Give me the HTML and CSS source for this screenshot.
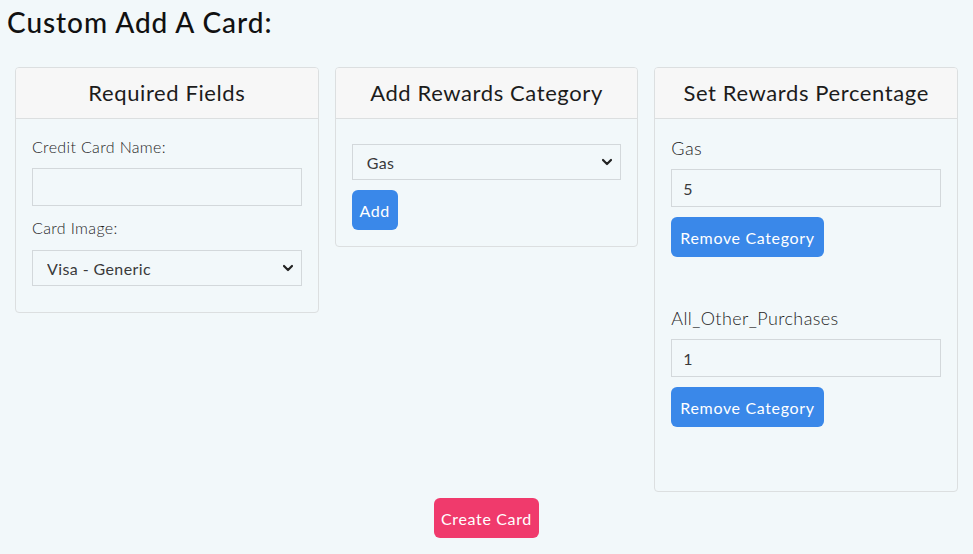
FILE: index.html
```html
<!DOCTYPE html>
<html>
<head>
<meta charset="utf-8">
<link rel="stylesheet" href="styles.css">
</head>
<body>
<h1 class="title">Custom Add A Card:</h1>
<div class="row">
  <div class="card card-req">
    <div class="card-header">Required Fields</div>
    <div class="card-body">
      <label class="lbl">Credit Card Name:</label>
      <input class="field field-name" type="text">
      <label class="lbl lbl-2">Card Image:</label>
      <select class="field sel"><option>Visa - Generic</option></select>
    </div>
  </div>
  <div class="card card-add">
    <div class="card-header">Add Rewards Category</div>
    <div class="card-body body-add">
      <select class="field sel"><option>Gas</option></select>
      <button class="btn btn-blue btn-add">Add</button>
    </div>
  </div>
  <div class="card card-pct">
    <div class="card-header">Set Rewards Percentage</div>
    <div class="card-body">
      <div class="cat">
        <label class="cat-lbl">Gas</label>
        <input class="field field-num" type="text" value="5">
        <button class="btn btn-blue">Remove Category</button>
      </div>
      <div class="cat">
        <label class="cat-lbl">All_Other_Purchases</label>
        <input class="field field-num" type="text" value="1">
        <button class="btn btn-blue">Remove Category</button>
      </div>
    </div>
  </div>
</div>
<div class="foot">
  <button class="btn btn-pink">Create Card</button>
</div>
</body>
</html>
```
FILE: styles.css
```css
* { box-sizing: border-box; }
html, body { margin: 0; padding: 0; }
body {
  background: #f2f8fa;
  font-family: "Lato", "Open Sans", sans-serif;
  color: #222;
  width: 973px;
  height: 554px;
  overflow: hidden;
}
.title {
  margin: 0;
  padding: 5px 0 0 7px;
  font-size: 28px;
  font-weight: 500;
  line-height: 34px;
  letter-spacing: 0.95px;
  color: #111;
  height: 67px;
}
.row {
  display: flex;
  gap: 16px;
  padding: 0 15px;
  align-items: flex-start;
}
.card {
  flex: 1;
  border: 1px solid #dcdfe0;
  border-radius: 4px;
  overflow: hidden;
}
.card-header {
  background: #f7f7f7;
  border-bottom: 1px solid #dcdfe0;
  height: 51px;
  line-height: 49px;
  text-align: center;
  font-size: 22px;
  letter-spacing: 0.6px;
  color: #1c1c1c;
}
.card-body {
  padding: 16px;
}
.lbl {
  display: block;
  font-size: 16px;
  line-height: 24px;
  letter-spacing: 0.35px;
  color: #1e1e1e;
  font-weight: 300;
  margin-bottom: 9px;
}
.lbl-2 { margin-top: 10px; margin-bottom: 10px; }
.field {
  display: block;
  width: 100%;
  border: 1px solid #d3d8db;
  background: transparent;
  font-family: inherit;
  font-size: 16px;
  letter-spacing: 0.4px;
  color: #3a3a3a;
  outline: none;
  border-radius: 0;
}
.field-name { height: 38px; }
.sel {
  height: 36px;
  appearance: none;
  -webkit-appearance: none;
  padding: 0 30px 0 14px;
  background-image: url("data:image/svg+xml,%3Csvg xmlns='http://www.w3.org/2000/svg' width='12' height='8' viewBox='0 0 12 8'%3E%3Cpath d='M2 2l4 4 4-4' fill='none' stroke='%23222' stroke-width='2.2' stroke-linecap='round' stroke-linejoin='round'/%3E%3C/svg%3E");
  background-repeat: no-repeat;
  background-position: right 7px center;
  background-size: 12px 8px;
  margin-bottom: 10px;
}
.body-add { padding-top: 25px; }
.btn {
  border: none;
  border-radius: 6px;
  color: #fff;
  font-family: inherit;
  font-size: 16px;
  letter-spacing: 0.65px;
  height: 40px;
  padding: 0 9px;
  cursor: pointer;
}
.btn-blue { background: #3a88e9; }
.btn-add { display: block; width: 46px; padding: 0; }
.cat { margin-bottom: 48px; }
.cat-lbl {
  display: block;
  font-size: 18px;
  line-height: 27px;
  letter-spacing: 0.4px;
  font-weight: 300;
  color: #1e1e1e;
  margin-bottom: 7px;
}
.field-num {
  height: 38px;
  padding: 0 11px;
  margin-bottom: 10px;
}
.foot {
  display: flex;
  justify-content: center;
  padding-top: 6px;
}
.btn-pink {
  background: #f03a6c;
  width: 105px;
  padding: 0;
}
```
